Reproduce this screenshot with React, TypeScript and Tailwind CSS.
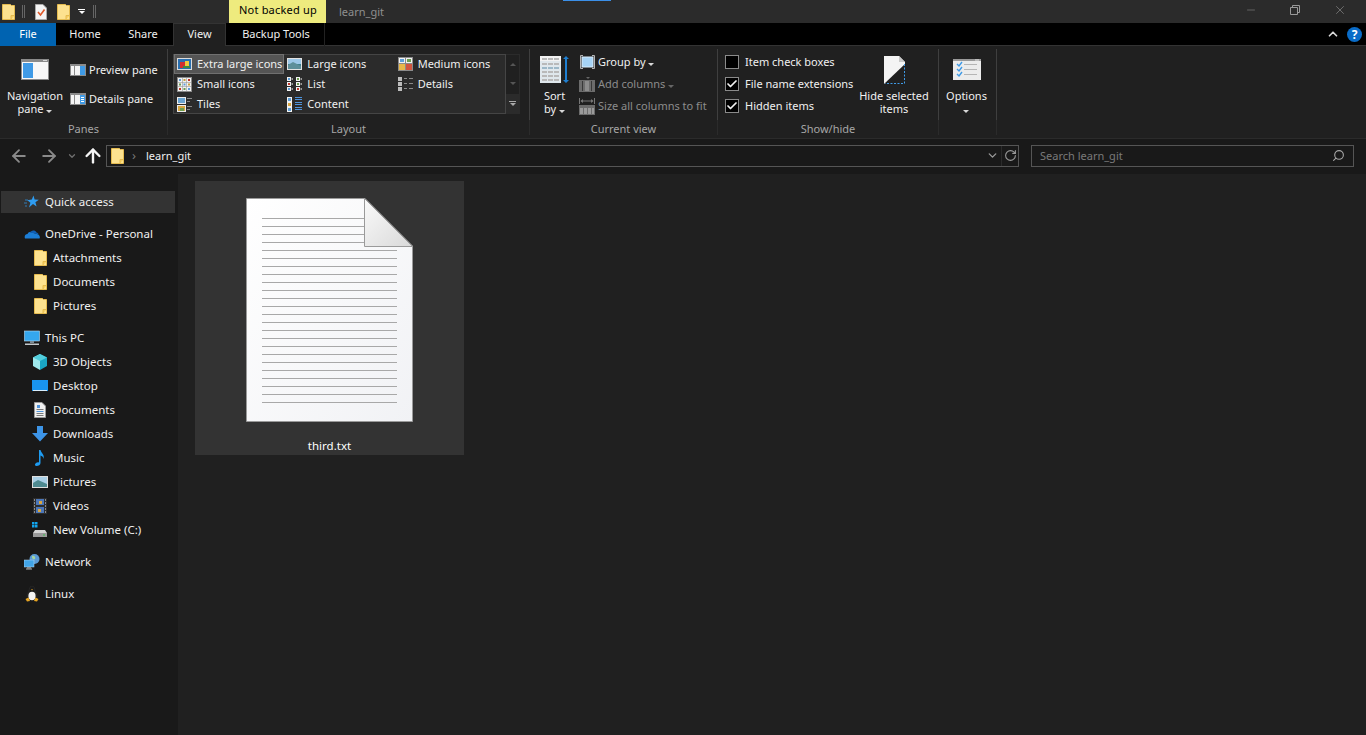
import type { FC, ReactNode } from "react";
import { ArrowLeft, ArrowRight, ArrowUp, ChevronDown, ChevronUp, Check, RotateCw, Search, X, Minus } from "lucide-react";

const FolderIcon: FC<{ className?: string }> = ({ className }) => (
    <svg width="13" height="16" viewBox="0 0 13 16" className={className}>
        <path d="M0.5 0.5H8.5L9.5 1.5H12.5V15.5H0.5Z" fill="#fde28f" stroke="#e5bb4f" />
        <path d="M9 15.5V11.5H12.5" fill="#f7cf62" stroke="#e5bb4f" />
    </svg>
);

const Tri: FC<{ className?: string }> = ({ className = "border-t-[#d8d8d8]" }) => (
    <span className={`inline-block w-0 h-0 border-x-[3px] border-x-transparent border-t-[3px] ${className}`} />
);

const NavPaneIcon = () => (
    <svg width="28" height="21" viewBox="0 0 28 21">
        <rect width="28" height="21" fill="#8b8b8b" />
        <rect x="1" y="3" width="26" height="17" fill="#f8f8f8" />
        <rect x="2" y="4" width="10" height="15" fill="#3f9ae6" />
        <rect x="22" y="1" width="4" height="1" fill="#d8d8d8" />
    </svg>
);

const PaneIcon: FC<{ details?: boolean }> = ({ details }) => (
    <svg width="16" height="12" viewBox="0 0 16 12">
        <rect width="16" height="12" fill="#8b8b8b" />
        <rect x="1" y="2" width="14" height="9" fill="#f4f4f4" />
        <rect x="4" y="2" width="1" height="9" fill="#8b8b8b" />
        {details ? (
            <g fill="#3f9ae6">
                <rect x="10" y="2" width="5" height="9" />
                <rect x="11" y="4" width="3" height="1" fill="#fff" />
                <rect x="11" y="6" width="3" height="1" fill="#fff" />
                <rect x="11" y="8" width="3" height="1" fill="#fff" />
            </g>
        ) : (
            <rect x="10" y="2" width="5" height="9" fill="#3f9ae6" />
        )}
    </svg>
);

const cellColors = ["#5f9fd8", "#c9a13c", "#c0392b", "#6d9c50", "#5f9fd8", "#c9a13c", "#c0392b", "#6d9c50", "#5f9fd8"];

const Cell: FC<{ x: number; y: number; s: number; c: string }> = ({ x, y, s, c }) => (
    <g>
        <rect x={x} y={y} width={s} height={s} fill="#f2f2f2" />
        <rect x={x + 1} y={y + 1} width={s - 2} height={s - 2} fill={c} />
    </g>
);

const XlIcon = () => (
    <svg width="15" height="12" viewBox="0 0 15 12">
        <rect width="15" height="12" fill="#dcdcdc" />
        <rect x="1" y="1" width="13" height="10" fill="#2a6fb0" />
        <rect x="3" y="4" width="5" height="6" fill="#d12f2f" />
        <rect x="8" y="3" width="4" height="5" fill="#f0c93a" />
        <rect x="6" y="8" width="7" height="2" fill="#3d8b40" />
    </svg>
);

const LargeIcon = () => (
    <svg width="15" height="12" viewBox="0 0 15 12">
        <rect width="15" height="12" fill="#e2e2e2" />
        <rect x="1" y="1" width="13" height="5" fill="#9cc7e8" />
        <rect x="1" y="6" width="13" height="5" fill="#3e7f8c" />
        <path d="M1 7L6 4L14 8V11H1Z" fill="#5d8f9a" />
    </svg>
);

const MediumIcon = () => (
    <svg width="15" height="14" viewBox="0 0 15 14">
        <rect width="15" height="14" fill="#8b8b8b" />
        <rect x="1" y="1" width="6" height="5" fill="#f2f2f2" />
        <rect x="8" y="1" width="6" height="5" fill="#f2f2f2" />
        <rect x="1" y="7" width="6" height="6" fill="#e8b84a" />
        <rect x="8" y="7" width="6" height="6" fill="#d2553f" />
        <rect x="2" y="2" width="4" height="3" fill="#5f9fd8" />
        <rect x="9" y="2" width="4" height="3" fill="#6d9c50" />
    </svg>
);

const SmallGridIcon = () => (
    <svg width="15" height="15" viewBox="0 0 15 15">
        <rect width="15" height="15" fill="#8b8b8b" />
        {cellColors.map((c, i) => (
            <Cell key={i} x={1 + (i % 3) * 4.5} y={1 + Math.floor(i / 3) * 4.5} s={4} c={c} />
        ))}
    </svg>
);

const ListIcon = () => (
    <svg width="15" height="15" viewBox="0 0 15 15">
        {[0, 5, 10].map((y) => (
            <g key={y}>
                <Cell x={0} y={y} s={4} c={y === 5 ? "#c0392b" : "#5f9fd8"} />
                <rect x="4.5" y={y + 1} width="1.5" height="2" fill="#9a9a9a" />
                <Cell x={9} y={y} s={4} c={y === 10 ? "#c0392b" : "#6d9c50"} />
                <rect x="13.5" y={y + 1} width="1.5" height="2" fill="#9a9a9a" />
            </g>
        ))}
    </svg>
);

const DetailsIcon = () => (
    <svg width="15" height="15" viewBox="0 0 15 15">
        {[0, 5, 10].map((y) => (
            <g key={y}>
                <rect x="0" y={y} width="4" height="4" fill="#bdbdbd" />
                <rect x="6" y={y + 1} width="3" height="1" fill="#8a8a8a" />
                <rect x="11" y={y + 1} width="4" height="1" fill="#8a8a8a" />
            </g>
        ))}
    </svg>
);

const TilesIcon = () => (
    <svg width="15" height="15" viewBox="0 0 15 15">
        <rect width="9" height="7" fill="#ececec" />
        <rect x="1" y="1" width="7" height="5" fill="#6aa4d2" />
        <rect y="8" width="9" height="7" fill="#ececec" />
        <rect x="1" y="9" width="7" height="5" fill="#d9a640" />
        <rect x="3" y="11" width="4" height="3" fill="#6d9c50" />
        <rect x="10" y="1" width="5" height="1" fill="#888" />
        <rect x="10" y="4" width="3" height="1" fill="#888" />
        <rect x="10" y="9" width="5" height="1" fill="#888" />
        <rect x="10" y="12" width="3" height="1" fill="#888" />
    </svg>
);

const ContentIcon = () => (
    <svg width="15" height="15" viewBox="0 0 15 15">
        {[0, 5, 10].map((y) => (
            <g key={y}>
                <Cell x={0} y={y} s={5} c={y === 5 ? "#d9a640" : "#5f9fd8"} />
                <rect x="8" y={y} width="7" height="1" fill="#4f94dc" />
                <rect x="8" y={y + 2} width="7" height="1" fill="#4f94dc" />
            </g>
        ))}
    </svg>
);

const SortIcon = () => (
    <svg width="29" height="27" viewBox="0 0 29 27">
        <rect x="0" y="0" width="21" height="27" fill="#dfe7ec" />
        <rect x="0" y="0" width="21" height="5" fill="#f2f2f2" />
        {[2, 7, 11, 15, 19, 23].map((y) =>
            [2, 8, 14].map((x) => <rect key={`${x}-${y}`} x={x} y={y} width="5" height="2" fill={y === 11 ? "#9db8c8" : "#b9b9b9"} />)
        )}
        <rect x="25" y="2" width="2" height="23" fill="#1f7fd0" />
        <path d="M23 3L26 0L29 3ZM23 24L26 27L29 24Z" fill="#1f7fd0" />
    </svg>
);

const GroupByIcon = () => (
    <svg width="15" height="14" viewBox="0 0 15 14">
        <path d="M3 0.5H0.5V13.5H3M12 0.5H14.5V13.5H12" fill="none" stroke="#b5b5b5" />
        <rect x="2" y="2" width="11" height="10" fill="#a6d3f5" stroke="#d9ecfa" />
    </svg>
);

const AddColumnsIcon = () => (
    <svg width="16" height="15" viewBox="0 0 16 15">
        <path d="M7 0H11L9 2Z" fill="#666" />
        <rect y="3" width="16" height="12" fill="#6c6c6c" />
        <rect x="3" y="4" width="1" height="10" fill="#383838" />
        <rect x="6" y="4" width="4" height="10" fill="#8c8c8c" />
        <rect x="12" y="4" width="1" height="10" fill="#383838" />
    </svg>
);

const SizeColumnsIcon = () => (
    <svg width="16" height="17" viewBox="0 0 16 17">
        <path d="M0.5 0V6M15.5 0V6M2 3H14" stroke="#777" fill="none" />
        <path d="M4 1V5L1.5 3ZM12 1V5L14.5 3Z" fill="#777" />
        <rect y="7" width="16" height="10" fill="#6c6c6c" />
        <rect x="1" y="10" width="3" height="6" fill="#9a9a9a" />
        <rect x="5" y="10" width="3" height="6" fill="#9a9a9a" />
        <rect x="9" y="10" width="3" height="6" fill="#9a9a9a" />
        <rect x="13" y="10" width="2" height="6" fill="#9a9a9a" />
    </svg>
);

const HideIcon = () => (
    <svg width="21" height="28" viewBox="0 0 21 28">
        <path d="M0 0H15L21 6V8L0 28Z" fill="#f4f4f4" />
        <path d="M15 0L21 6H15Z" fill="#c9c9c9" />
        <path d="M20.5 8V27.5H1" fill="none" stroke="#3f9ae6" strokeDasharray="2 1.5" />
    </svg>
);

const OptionsIcon = () => (
    <svg width="28" height="21" viewBox="0 0 28 21">
        <rect width="28" height="21" fill="#ececec" />
        <rect y="0" width="28" height="2" fill="#9a9a9a" />
        <rect x="22" y="0.5" width="4" height="1" fill="#e0e0e0" />
        {[5, 10, 15].map((y) => (
            <g key={y}>
                <path d={`M4 ${y}L6 ${y + 2}L9 ${y - 2}`} stroke="#3f9ae6" strokeWidth="1.4" fill="none" />
                <rect x="11" y={y} width="13" height="1" fill="#b5b5b5" />
            </g>
        ))}
    </svg>
);

const TxtFileIcon = () => (
    <svg width="167" height="224" viewBox="0 0 167 224">
        <defs>
            <linearGradient id="page" x1="0" y1="0" x2="1" y2="1">
                <stop offset="0" stopColor="#ffffff" />
                <stop offset="1" stopColor="#f1f2f5" />
            </linearGradient>
            <linearGradient id="fold" x1="0" y1="0" x2="1" y2="1">
                <stop offset="0" stopColor="#fafafa" />
                <stop offset="1" stopColor="#d9d9d9" />
            </linearGradient>
        </defs>
        <path d="M0.5 0.5H119L166.5 48V223.5H0.5Z" fill="url(#page)" stroke="#9a9a9a" />
        {Array.from({ length: 24 }).map((_, i) => (
            <rect key={i} x="16" y={20 + i * 8} width={i < 4 ? 102 : 135} height="1" fill="#a8a8a8" />
        ))}
        <path d="M118.5 0.5V48.5H166.5Z" fill="url(#fold)" stroke="#9a9a9a" />
    </svg>
);

const Star = () => (
    <svg width="16" height="16" viewBox="0 0 16 16">
        <path d="M9.5 1.5L10.6 5.6L14.8 5.8L11.4 8.2L12.6 12.5L9 10L5 13.5L6.4 8.8L3.4 6.2L7.8 5.6Z" fill="#2e9cf0" />
        <path d="M1 6H4M0 9H3M1 12H3" stroke="#2e9cf0" strokeWidth="0.7" />
    </svg>
);

const Cloud = () => (
    <svg width="16" height="16" viewBox="0 0 16 16">
        <path d="M1 12.5C0 10 1.5 8 3.5 8C4.5 5.5 8 5 9.5 7L13 8C15.5 8.5 16.5 11 15.5 12.5Z" fill="#1c7ed6" />
        <path d="M6 7C7 4 11 3.5 12.5 6.5C13.5 6.5 14.5 7.5 14.5 8.5L9.5 7Z" fill="#0f5fb5" />
    </svg>
);

const Monitor = () => (
    <svg width="16" height="16" viewBox="0 0 16 16">
        <rect x="0.5" y="1" width="15" height="10" fill="#35a7ee" stroke="#b8dcf5" strokeWidth="0.6" />
        <rect x="6" y="11" width="4" height="2" fill="#7b8a94" />
        <rect x="1" y="13.5" width="14" height="1.5" fill="#c2c8cc" />
    </svg>
);

const Cube = () => (
    <svg width="16" height="16" viewBox="0 0 16 16">
        <path d="M8 0L15 3.5V12L8 16Z" fill="#1aa6c4" />
        <path d="M8 0L1 3.5V12L8 16Z" fill="#9fe9ec" />
        <path d="M1 3.5L8 7L15 3.5L8 0Z" fill="#53cfdd" />
    </svg>
);

const Desktop = () => (
    <svg width="16" height="16" viewBox="0 0 16 16">
        <rect y="2" width="16" height="11" fill="#1994ee" />
        <rect x="1" y="12" width="14" height="1" fill="#d9eefc" />
    </svg>
);

const Doc = () => (
    <svg width="16" height="16" viewBox="0 0 16 16">
        <path d="M2.5 0.5H10L13.5 4V15.5H2.5Z" fill="#f0f0f0" stroke="#9a9a9a" />
        <rect x="5" y="3" width="3" height="3" fill="#4f94dc" />
        {[7, 9, 11, 13].map((y) => (
            <rect key={y} x="4.5" y={y} width="7" height="1" fill={y === 9 ? "#4f94dc" : "#7a7a7a"} />
        ))}
    </svg>
);

const Down = () => (
    <svg width="16" height="16" viewBox="0 0 16 16">
        <path d="M5 0H11V7H16L8 15.5L0 7H5Z" fill="#3d95e8" />
    </svg>
);

const Note = () => (
    <svg width="16" height="16" viewBox="0 0 16 16">
        <path d="M7 0H8.5C9 3 13 4.5 11.5 9C11.5 6.5 9.5 6 8.5 5.5V13C8.5 15 6.5 16 4.5 16C3 16 2.5 14.5 3.5 13.5C4.5 12.5 6 12 7 12.5Z" fill="#1e9bf0" />
    </svg>
);

const Picture = () => (
    <svg width="16" height="16" viewBox="0 0 16 16">
        <rect y="2" width="16" height="12" fill="#dedede" />
        <rect x="1" y="3" width="14" height="10" fill="#a9cfe6" />
        <path d="M1 9L6 6L15 10V13H1Z" fill="#4e8a90" />
    </svg>
);

const Film = () => (
    <svg width="16" height="16" viewBox="0 0 16 16">
        <rect x="1" y="0" width="14" height="16" fill="#2d2d2d" />
        <rect x="4" y="1" width="8" height="6" fill="#4b76b8" />
        <rect x="4" y="9" width="8" height="6" fill="#4b76b8" />
        <rect x="7" y="3" width="3" height="3" fill="#d9a640" />
        <rect x="6" y="11" width="3" height="3" fill="#d9a640" />
        {[1, 4, 7, 10, 13].map((y) => (
            <g key={y} fill="#8a8a8a">
                <rect x="2" y={y} width="1" height="2" />
                <rect x="13" y={y} width="1" height="2" />
            </g>
        ))}
    </svg>
);

const Drive = () => (
    <svg width="16" height="16" viewBox="0 0 16 16">
        <g fill="#12a5ee">
            <rect x="0" y="0" width="2.5" height="2.5" />
            <rect x="3" y="0" width="2.5" height="2.5" />
            <rect x="0" y="3" width="2.5" height="2.5" />
            <rect x="3" y="3" width="2.5" height="2.5" />
        </g>
        <path d="M3 8H13L15 11V15H1V11Z" fill="#d4d4d4" />
        <rect x="1" y="11" width="14" height="4" fill="#9a9a9a" />
        <rect x="11" y="12.5" width="2" height="1" fill="#37c24a" />
    </svg>
);

const Network = () => (
    <svg width="16" height="16" viewBox="0 0 16 16">
        <circle cx="10.5" cy="5" r="5" fill="#5b9bd5" />
        <path d="M8 2C10 1 12 3 11 5C9.5 6 7.5 4.5 8 2Z" fill="#a4d4a0" />
        <rect x="0" y="6" width="10" height="7" fill="#42a5e8" stroke="#b8dcf5" strokeWidth="0.5" />
        <rect x="3" y="13" width="4" height="1.5" fill="#8a8a8a" />
        <rect x="2" y="14.5" width="6" height="1" fill="#b5b5b5" />
    </svg>
);

const Tux = () => (
    <svg width="16" height="16" viewBox="0 0 16 16">
        <path d="M8 0C10.5 0 10.5 3 11 5C12 7 13 9 13 11L3 11C3 9 4 7 5 5C5.5 3 5.5 0 8 0Z" fill="#1a1a1a" stroke="#444" strokeWidth="0.3" />
        <ellipse cx="8" cy="10" rx="3.6" ry="4.2" fill="#f4f4f4" />
        <path d="M7 3.2H9L8 4.4Z" fill="#e8a623" />
        <path d="M1.5 13L4.5 11.5L6 15L3 15.5ZM14.5 13L11.5 11.5L10 15L13 15.5Z" fill="#e8a623" />
    </svg>
);

const Group: FC<{ label: string; width: string; children: ReactNode }> = ({ label, width, children }) => (
    <div className={`${width} flex flex-col pt-[3px]`}>
        <div className="h-[71px] flex border-r border-[#3f3f3f]">{children}</div>
        <div className="h-[15px] border-r border-[#2b2b2b] text-center leading-[18px] text-[#a6a6a6]">{label}</div>
    </div>
);

const BigButton: FC<{ icon: ReactNode; top: string; gap: string; width: string; children: ReactNode }> = ({ icon, top, gap, width, children }) => (
    <div className={`${width} ${top} flex flex-col items-center shrink-0`}>
        <div className={gap}>{icon}</div>
        <div className="text-center leading-[13px] whitespace-nowrap">{children}</div>
    </div>
);

const SmallRow: FC<{ icon: ReactNode; dim?: boolean; children: ReactNode }> = ({ icon, dim, children }) => (
    <div className={`h-[22px] flex items-center gap-[3px] whitespace-nowrap ${dim ? "text-[#8c8c8c]" : ""}`}>
        <span className="w-4 flex justify-center shrink-0">{icon}</span>
        <span>{children}</span>
    </div>
);

const CheckRow: FC<{ checked?: boolean; label: string }> = ({ checked, label }) => (
    <div className="h-[22px] flex items-center gap-[6px] whitespace-nowrap">
        <span className="w-[14px] h-[14px] border border-[#8a8a8a] bg-black flex items-center justify-center">
            {checked && <Check size={12} strokeWidth={3.5} color="#f2f2f2" />}
        </span>
        {label}
    </div>
);

const GalleryItem: FC<{ icon: ReactNode; selected?: boolean; label: string }> = ({ icon, selected, label }) => (
    <div className={`h-[20px] flex items-center gap-[5px] whitespace-nowrap ${selected ? "bg-[#555555] border border-[#707070] pl-[2px]" : "pl-[3px]"}`}>
        <span className="w-[15px] flex justify-center shrink-0">{icon}</span>
        {label}
    </div>
);

const SideRow: FC<{ icon: ReactNode; label: string; child?: boolean; active?: boolean; mt?: boolean }> = ({ icon, label, child, active, mt }) => (
    <div className={`h-6 flex items-center gap-[5px] whitespace-nowrap ${child ? "pl-8" : "pl-6"} ${mt ? "mt-2" : ""}`}>
        {active && <span className="absolute left-px top-[17px] w-[174px] h-[22px] bg-[#333333]" />}
        <span className="relative w-4 h-4 flex justify-center items-center">{icon}</span>
        <span className="relative">{label}</span>
    </div>
);

const App = () => {
    return (
        <div
            className="w-[1366px] h-[735px] overflow-hidden flex flex-col bg-[#202020] text-[#f0f0f0] text-[11px]"
            style={{ fontFamily: '"Noto Sans", sans-serif' }}
        >
            {/* title bar */}
            <div className="relative h-[23px] shrink-0 bg-[#2b2b2b] flex items-center">
                <span className="absolute left-[563px] top-0 w-[48px] h-px bg-[#3b8fe8]" />
                <FolderIcon className="ml-[2px]" />
                <span className="ml-[7px] w-[3px] h-[13px] border-x border-[#666]" />
                <svg width="12" height="16" viewBox="0 0 12 16" className="ml-[10px]">
                    <path d="M0.5 0.5H8L11.5 4V15.5H0.5Z" fill="#f4f4f4" stroke="#aaa" />
                    <path d="M3 8L5.5 11L9.5 5.5" fill="none" stroke="#e0592a" strokeWidth="1.6" />
                </svg>
                <FolderIcon className="ml-[10px]" />
                <span className="ml-[8px] flex flex-col items-center gap-[1px]">
                    <span className="w-[7px] h-px bg-white" />
                    <Tri className="border-t-white" />
                </span>
                <span className="ml-[8px] w-[3px] h-[13px] border-x border-[#666]" />
                <div className="ml-[133px] w-[97px] h-full bg-[#eeeb7e] text-black pl-[10px] leading-[20px] tracking-[0.2px]">Not backed up</div>
                <div className="ml-[13px] pt-[2px] text-[#8f8f8f]">learn_git</div>
                <div className="ml-auto pb-[3px] flex items-center text-[#9a9a9a]">
                    <Minus size={12} strokeWidth={1} className="mr-[33px]" />
                    <svg width="10" height="10" viewBox="0 0 10 10" className="mr-[33px]">
                        <path d="M0.5 2.5H7.5V9.5H0.5ZM2.5 2.5V0.5H9.5V7.5H7.5" fill="none" stroke="#9a9a9a" />
                    </svg>
                    <X size={14} strokeWidth={1} className="mr-[19px]" />
                </div>
            </div>

            {/* tabs */}
            <div className="h-[23px] shrink-0 bg-black flex items-center border-b border-[#333] relative">
                <div className="w-[56px] h-[23px] bg-[#0063b1] text-white flex items-center justify-center">File</div>
                <div className="w-[58px] text-center">Home</div>
                <div className="w-[58px] text-center">Share</div>
                <div className="w-[53px] h-[23px] ml-px bg-[#202020] border-x border-t border-[#333] flex items-center justify-center">View</div>
                <div className="w-[97px] ml-[2px] h-[23px] border-r border-[#222] flex items-center justify-center">Backup Tools</div>
                <div className="ml-auto flex items-center mr-[4px] gap-[7px]">
                    <ChevronUp size={14} strokeWidth={3} color="#d8d8d8" />
                    <span className="w-[15px] h-[15px] rounded-full bg-[#0a6cc8] text-white font-bold text-[12px] leading-[15px] text-center">?</span>
                </div>
            </div>

            {/* ribbon */}
            <div className="h-[92px] shrink-0 bg-[#202020] flex">
                <Group label="Panes" width="w-[168px]">
                    <BigButton icon={<NavPaneIcon />} top="pt-[10px]" gap="mb-[9px]" width="w-[70px]">
                        Navigation<br />pane <Tri />
                    </BigButton>
                    <div className="pt-[11px] flex flex-col gap-[9px] whitespace-nowrap">
                        <div className="h-5 flex items-center gap-[3px]"><PaneIcon />Preview pane</div>
                        <div className="h-5 flex items-center gap-[3px]"><PaneIcon details />Details pane</div>
                    </div>
                </Group>
                <Group label="Layout" width="w-[362px]">
                    <div className="ml-[5px] mt-[5px] h-[60px] w-[347px] flex">
                        <div className="w-[333px] border border-t-0 border-[#454545] bg-[#2b2b2b] shadow-[inset_0_1px_0_#454545] grid grid-cols-3 content-start">
                            <GalleryItem selected icon={<XlIcon />} label="Extra large icons" />
                            <GalleryItem icon={<LargeIcon />} label="Large icons" />
                            <GalleryItem icon={<MediumIcon />} label="Medium icons" />
                            <GalleryItem icon={<SmallGridIcon />} label="Small icons" />
                            <GalleryItem icon={<ListIcon />} label="List" />
                            <GalleryItem icon={<DetailsIcon />} label="Details" />
                            <GalleryItem icon={<TilesIcon />} label="Tiles" />
                            <GalleryItem icon={<ContentIcon />} label="Content" />
                        </div>
                        <div className="w-[14px] border border-l-0 border-[#2b2b2b] flex flex-col items-center">
                            <div className="h-[20px] flex items-center"><Tri className="rotate-180 border-t-[#555]" /></div>
                            <div className="h-[20px] flex items-center"><Tri className="border-t-[#555]" /></div>
                            <div className="h-[20px] w-full flex flex-col items-center justify-center gap-px bg-[#2b2b2b]">
                                <span className="w-[7px] h-px bg-[#aaa]" />
                                <Tri className="border-t-[#aaa]" />
                            </div>
                        </div>
                    </div>
                </Group>
                <Group label="Current view" width="w-[188px]">
                    <BigButton icon={<SortIcon />} top="pt-[7px]" gap="mb-[6px]" width="w-[49px]">
                        Sort<br />by <Tri />
                    </BigButton>
                    <div className="pt-[2px]">
                        <SmallRow icon={<GroupByIcon />}>Group by <Tri /></SmallRow>
                        <SmallRow dim icon={<AddColumnsIcon />}>Add columns <Tri className="border-t-[#666]" /></SmallRow>
                        <SmallRow dim icon={<SizeColumnsIcon />}>Size all columns to fit</SmallRow>
                    </div>
                </Group>
                <Group label="Show/hide" width="w-[221px]">
                    <div className="pl-[7px] pt-[2px] w-[140px] shrink-0">
                        <CheckRow label="Item check boxes" />
                        <CheckRow checked label="File name extensions" />
                        <CheckRow checked label="Hidden items" />
                    </div>
                    <BigButton icon={<HideIcon />} top="pt-[7px]" gap="mb-[5px]" width="w-[72px]">
                        Hide selected<br />items
                    </BigButton>
                </Group>
                <Group label="" width="w-[58px]">
                    <BigButton icon={<OptionsIcon />} top="pt-[10px]" gap="mb-[9px]" width="w-[55px]">
                        Options<br /><Tri />
                    </BigButton>
                </Group>
            </div>

            {/* address bar */}
            <div className="h-[36px] shrink-0 bg-[#191919] border-t border-[#2b2b2b] pb-[2px] flex items-center">
                <ArrowLeft size={20} color="#8a8a8a" strokeWidth={2.2} className="ml-[9px]" />
                <ArrowRight size={20} color="#8a8a8a" strokeWidth={2.2} className="ml-[10px]" />
                <ChevronDown size={10} color="#6f6f6f" strokeWidth={3} className="ml-[8px]" />
                <ArrowUp size={22} color="#f4f4f4" strokeWidth={2.6} className="ml-[5px]" />
                <div className="ml-[2px] w-[913px] h-[22px] border border-[#555] flex items-center text-[#f0f0f0]">
                    <FolderIcon className="ml-[4px]" />
                    <span className="ml-[8px] text-[#777] text-[13px] leading-none">›</span>
                    <span className="ml-[10px] pt-px">learn_git</span>
                    <ChevronDown size={13} color="#9a9a9a" strokeWidth={2.5} className="ml-auto mr-[2px]" />
                    <span className="h-full flex items-center border-l border-[#2b2b2b] pl-[2px] pr-[1px]">
                        <RotateCw size={13} color="#9a9a9a" strokeWidth={2} />
                    </span>
                </div>
                <div className="ml-[12px] w-[323px] h-[22px] border border-[#555] flex items-center pl-[8px] pr-[8px] text-[#7a7a7a]">
                    <span className="pt-px">Search learn_git</span>
                    <Search size={13} color="#a8a8a8" strokeWidth={2} className="ml-auto -scale-x-100" />
                </div>
            </div>

            {/* body */}
            <div className="flex-1 flex min-h-0 text-[11.5px]">
                <div className="relative w-[178px] shrink-0 bg-[#191919] pt-4">
                    <SideRow active icon={<Star />} label="Quick access" />
                    <SideRow mt icon={<Cloud />} label="OneDrive - Personal" />
                    <SideRow child icon={<FolderIcon />} label="Attachments" />
                    <SideRow child icon={<FolderIcon />} label="Documents" />
                    <SideRow child icon={<FolderIcon />} label="Pictures" />
                    <SideRow mt icon={<Monitor />} label="This PC" />
                    <SideRow child icon={<Cube />} label="3D Objects" />
                    <SideRow child icon={<Desktop />} label="Desktop" />
                    <SideRow child icon={<Doc />} label="Documents" />
                    <SideRow child icon={<Down />} label="Downloads" />
                    <SideRow child icon={<Note />} label="Music" />
                    <SideRow child icon={<Picture />} label="Pictures" />
                    <SideRow child icon={<Film />} label="Videos" />
                    <SideRow child icon={<Drive />} label="New Volume (C:)" />
                    <SideRow mt icon={<Network />} label="Network" />
                    <SideRow mt icon={<Tux />} label="Linux" />
                </div>
                <div className="flex-1 pl-[17px] pt-[7px]">
                    <div className="w-[269px] h-[274px] bg-[#333333] flex flex-col items-center pt-[17px]">
                        <TxtFileIcon />
                        <div className="mt-[15px] text-white">third.txt</div>
                    </div>
                </div>
            </div>
        </div>
    );
};

export default App;
